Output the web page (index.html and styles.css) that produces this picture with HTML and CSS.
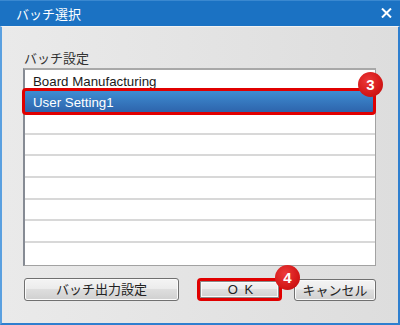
FILE: index.html
```html
<!DOCTYPE html>
<html lang="ja">
<head>
<meta charset="utf-8">
<link rel="stylesheet" href="styles.css">
</head>
<body>
<div class="window">
  <div class="titlebar">
    <span class="title">バッチ選択</span>
    <span class="close"><svg width="11" height="10" viewBox="0 0 11 10"><path d="M1 0.5 L10 9.5 M10 0.5 L1 9.5" stroke="#fff" stroke-width="2" fill="none"/></svg></span>
  </div>
  <div class="body">
    <div class="label">バッチ設定</div>
    <div class="listwrap">
      <div class="list">
        <div class="row first">Board Manufacturing</div>
        <div class="row selected">User Setting1</div>
        <div class="row empty"></div>
        <div class="row empty"></div>
        <div class="row empty"></div>
        <div class="row empty"></div>
        <div class="row empty"></div>
        <div class="row empty"></div>
        <div class="row empty last"></div>
      </div>
      <div class="mark mark-row"></div>
      <div class="badge badge-3">3</div>
    </div>
    <div class="buttons">
      <div class="btn btn-output">バッチ出力設定</div>
      <div class="okwrap">
        <div class="btn btn-ok">O K</div>
        <div class="badge badge-4">4</div>
      </div>
      <div class="btn btn-cancel">キャンセル</div>
    </div>
  </div>
</div>
</body>
</html>
```
FILE: styles.css
```css
html, body {
  margin: 0;
  padding: 0;
}
body {
  width: 400px;
  height: 325px;
  overflow: hidden;
  font-family: "Liberation Sans", "Noto Sans CJK JP", sans-serif;
}
.window {
  width: 400px;
  height: 325px;
  display: flex;
  flex-direction: column;
  box-sizing: border-box;
}
.titlebar {
  height: 26px;
  flex: none;
  background: #1b72c3;
  border-top: 1px solid #3a88d0;
  box-sizing: border-box;
  display: flex;
  align-items: center;
  justify-content: space-between;
  padding: 0 8px 0 16px;
  color: #fff;
}
.title {
  font-family: "Noto Sans CJK JP", sans-serif;
  font-size: 13px;
  line-height: 15px;
  margin-top: -1px;
}
.close {
  display: flex;
  margin-top: -1px;
}
.body {
  flex: 1;
  box-sizing: border-box;
  border-left: 2px solid #5aa0e0;
  border-right: 2px solid #2f7fcf;
  border-bottom: 2px solid #2f7fcf;
  border-top: 1px solid #f2f2f2;
  background: linear-gradient(to right, #eaeaea, #dddddd);
  padding: 23px 22px 0 21px;
  display: flex;
  flex-direction: column;
}
.label {
  font-family: "Noto Sans CJK JP", sans-serif;
  font-size: 13px;
  line-height: 15px;
  color: #333;
  padding-left: 1px;
  margin-bottom: 3px;
}
.listwrap {
  position: relative;
}
.list {
  background: #fff;
  border: 1px solid #a2a2a2;
  border-left: 2px solid #868b94;
  border-top: 2px solid #a8a8a8;
  height: 198px;
  box-sizing: border-box;
  overflow: hidden;
}
.row {
  box-sizing: border-box;
  font-size: 13.3px;
  line-height: 15px;
  color: #1a1a1a;
  padding-left: 8px;
}
.row.first {
  height: 20px;
  padding-top: 4px;
}
.row.selected {
  height: 23px;
  padding-top: 5px;
  color: #fff;
  background: linear-gradient(to bottom, #3f8fd4, #2d62aa);
}
.row.empty {
  height: 21.7px;
  border-bottom: 2px solid #d8d8d8;
}
.row.empty.last {
  border-bottom: none;
}
.mark {
  position: absolute;
  border: 3px solid #e00000;
  border-radius: 4px;
  box-sizing: border-box;
}
.mark-row {
  left: -1px;
  top: 20px;
  width: 354px;
  height: 27px;
}
.badge {
  position: absolute;
  width: 25px;
  height: 25px;
  border-radius: 50%;
  background: radial-gradient(circle at 40% 35%, #ec3a3a, #d41818 60%, #b80c0c);
  color: #fff;
  font-family: "Liberation Sans", sans-serif;
  font-weight: bold;
  font-size: 15px;
  line-height: 25px;
  text-align: center;
}
.badge-3 {
  left: 335px;
  top: 4px;
}
.badge-4 {
  left: 78px;
  top: -13px;
}
.buttons {
  display: flex;
  align-items: flex-start;
  margin-top: 12px;
  padding-left: 1px;
}
.btn {
  box-sizing: border-box;
  height: 23px;
  border: 1px solid #707070;
  border-radius: 3px;
  background: linear-gradient(to bottom, #f4f4f4 0%, #ececec 45%, #dedede 50%, #d0d0d0 100%);
  box-shadow: inset 0 0 0 1px #fbfbfb;
  font-family: "Noto Sans CJK JP", sans-serif;
  font-size: 13px;
  line-height: 20px;
  color: #222;
  text-align: center;
}
.btn-output {
  width: 155px;
}
.okwrap {
  position: relative;
  margin-left: 18px;
  width: 85px;
  height: 23px;
}
.btn-ok {
  width: 85px;
  border: 3px solid #e00000;
  border-radius: 4px;
  box-shadow: inset 0 0 0 1px #8a8a8a, inset 0 0 0 2px #fafafa;
  line-height: 17px;
  font-family: "Liberation Sans", sans-serif;
  word-spacing: 3px;
  padding-left: 2px;
}
.btn-cancel {
  width: 82px;
  margin-left: 12px;
  margin-top: 1px;
  height: 22px;
}
```
